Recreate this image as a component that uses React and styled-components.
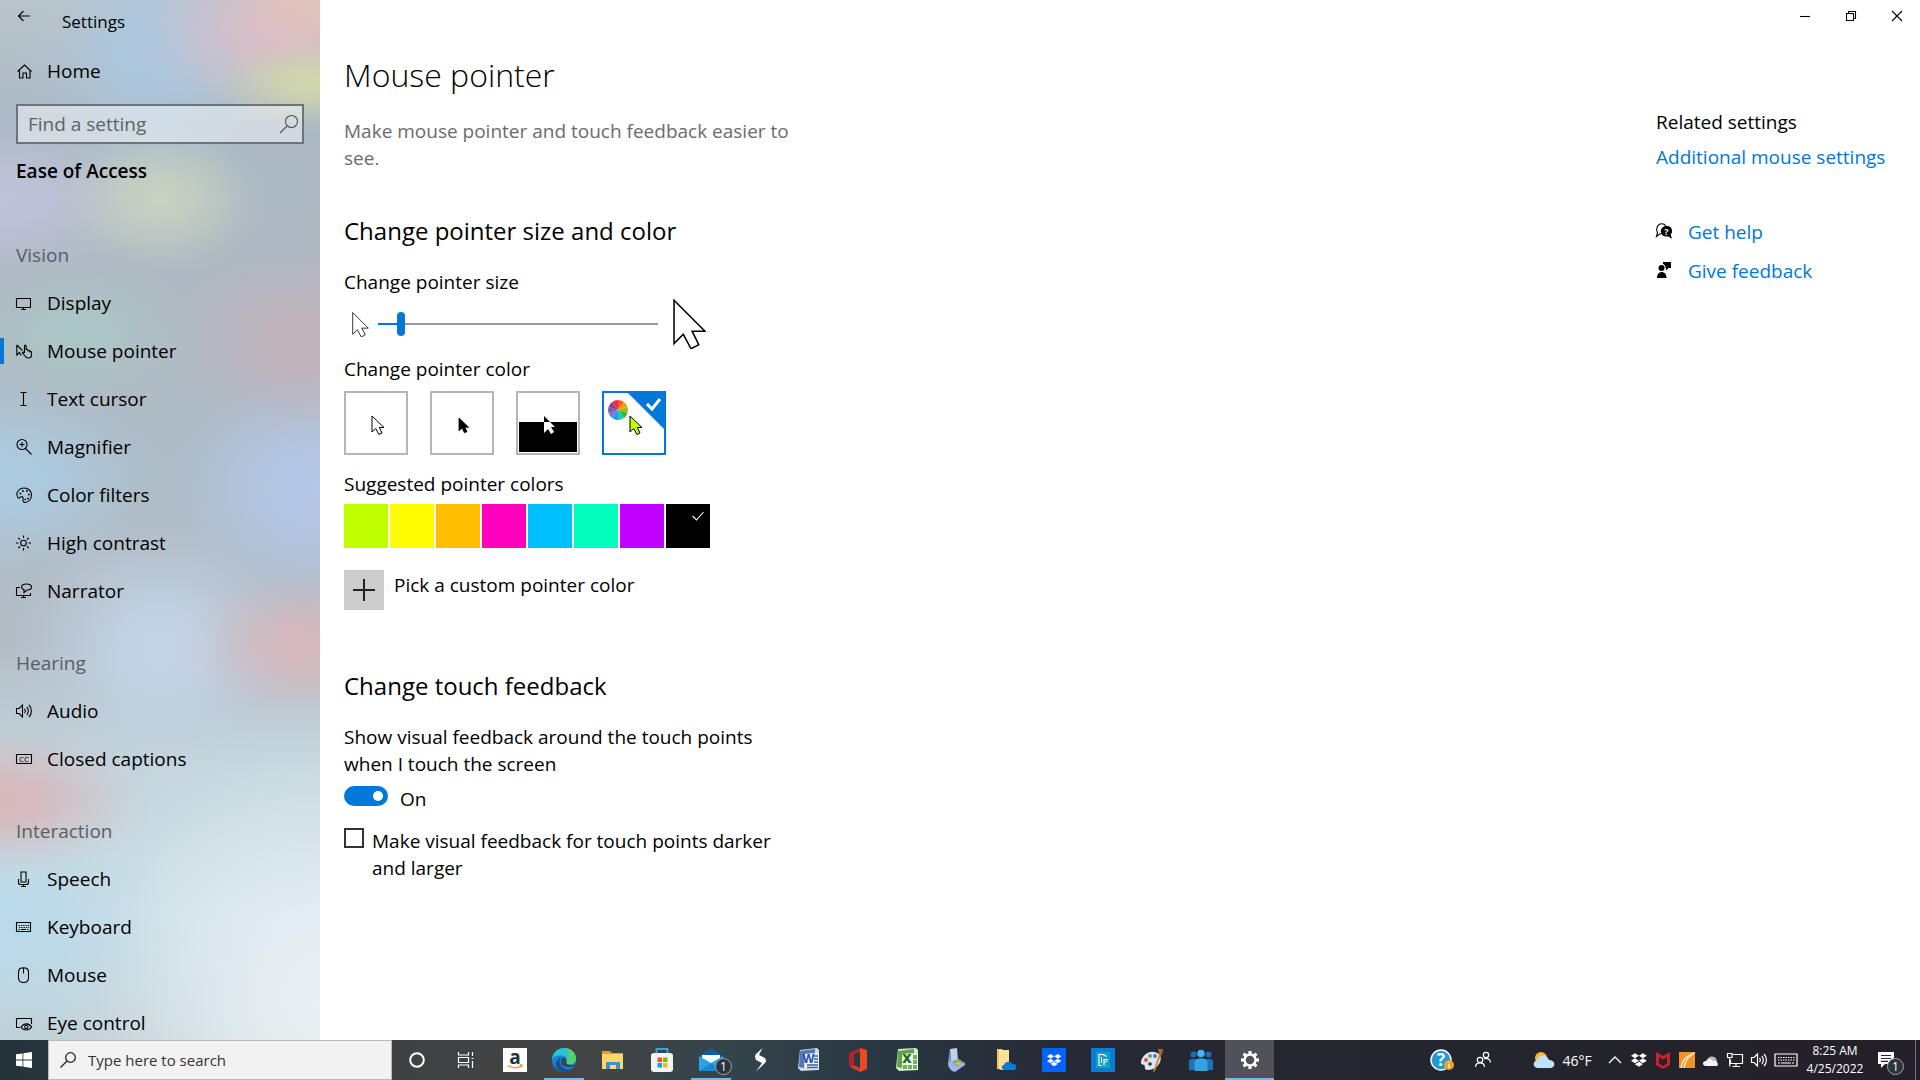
import { useState } from 'react'
import styled, { createGlobalStyle, css } from 'styled-components'

const GlobalStyle = createGlobalStyle`
    * {
        box-sizing: border-box;
    }
    body {
        margin: 0;
        background: #ffffff;
        color: #000000;
        font-family: "Open Sans", "Noto Sans", sans-serif;
        font-size: 19px;
        line-height: 27px;
    }
    button, input {
        font: inherit;
        color: inherit;
    }
    button {
        padding: 0;
        border: 0;
        background: none;
    }
`

const Desktop = styled.div`
    display: flex;
    flex-direction: column;
    height: 100vh;
`

const Window = styled.div`
    display: flex;
    flex: 1;
    min-height: 0;
`

/* ---------- sidebar ---------- */

// soft spot of colour: rgb triplet, radii and centre
const spot = (rgb, radii, at, strength = 0.9) =>
    `radial-gradient(ellipse ${radii} at ${at}, rgb(${rgb} / ${strength}), rgb(${rgb} / ${strength * 0.8}) 30%, rgb(${rgb} / ${strength * 0.4}) 58%, rgb(${rgb} / ${strength * 0.1}) 82%, transparent)`

const spots = [
    spot('228 196 184', '110px 70px', '100% 0%'),
    spot('210 217 168', '110px 50px', '98% 8%'),
    spot('222 190 202', '140px 90px', '84% 3%'),
    spot('170 200 225', '140px 130px', '48% 5%'),
    spot('202 213 193', '110px 80px', '50% 19%'),
    spot('192 195 220', '170px 90px', '0% 19%'),
    spot('168 204 200', '130px 80px', '24% 32%', 0.7),
    spot('200 178 186', '150px 100px', '98% 33%', 0.8),
    spot('181 200 237', '170px 130px', '100% 47%'),
    spot('171 205 228', '180px 110px', '0% 46%'),
    spot('218 183 187', '130px 80px', '96% 62%'),
    spot('197 215 234', '150px 130px', '50% 62%'),
    spot('218 180 183', '160px 80px', '0% 77%'),
    spot('184 217 234', '180px 130px', '2% 89%'),
    spot('236 243 246', '280px 320px', '100% 97%'),
]

const Sidebar = styled.aside`
    flex: none;
    width: 320px;
    overflow: hidden;
    background: ${spots.join(', ')},
        linear-gradient(#b9c4c9 0%, #abb9c5 12%, #b1b9c2 30%, #aebcc6 45%, #b4bdc6 62%, #c3d5dd 74%, #cadde4 88%, #c0d0d6 100%);
`

const TitleBar = styled.div`
    display: flex;
    gap: 30px;
    padding: 8px 16px 0;
    font-size: 17px;
`

const BackButton = styled.button`
    display: flex;
    width: 16px;
    height: 16px;
`

const NavLink = styled.a`
    display: flex;
    align-items: center;
    gap: 15px;
    height: 48px;
    padding-right: 16px;
    padding-left: 12px;
    border-left: 4px solid ${({ $active }) => ($active ? '#0078d7' : 'transparent')};
    border-image: ${({ $active }) =>
        $active ? 'linear-gradient(transparent 24%, #0078d7 24%, #0078d7 76%, transparent 76%) 1' : 'none'};
    border-width: 0 0 0 4px;
    color: #000000;
    text-decoration: none;
`

const HomeLink = styled(NavLink)`
    margin-top: 12px;
`

const SearchBox = styled.label`
    display: flex;
    align-items: center;
    height: 40px;
    margin: 9px 16px 0;
    padding: 0 3px 0 10px;
    border: 2px solid #6c7579;
    background: rgba(255, 255, 255, 0.45);
`

const SearchInput = styled.input`
    flex: 1;
    min-width: 0;
    padding: 0;
    border: 0;
    outline: 0;
    background: transparent;
    &::placeholder {
        color: #5c6468;
        opacity: 1;
    }
`

const Category = styled.h2`
    margin: 14px 16px 46px;
    font-size: 19px;
    font-weight: 600;
    line-height: 27px;
`

const NavGroup = styled.nav`
    margin-bottom: 24px;
`

const NavHeading = styled.h3`
    display: flex;
    align-items: center;
    height: 48px;
    margin: 0 16px;
    color: #566066;
    font-size: 19px;
    font-weight: 400;
`

/* ---------- content ---------- */

const Content = styled.div`
    display: flex;
    flex: 1;
    flex-direction: column;
    min-width: 0;
`

const Controls = styled.div`
    display: flex;
    justify-content: flex-end;
`

const ControlButton = styled.button`
    display: flex;
    align-items: center;
    justify-content: center;
    width: 46px;
    height: 32px;
`

const Columns = styled.div`
    display: flex;
    justify-content: space-between;
`

const Page = styled.main`
    width: 480px;
    padding: 20px 0 0 24px;
`

const Title = styled.h1`
    margin: 0 0 20px;
    font-size: 32px;
    font-weight: 300;
    line-height: 46px;
`

const Intro = styled.p`
    margin: 0 0 41px;
    color: #6b6b6b;
`

const Section = styled.section`
    margin-bottom: 58px;
`

const SectionTitle = styled.h2`
    margin: 0 0 20px;
    font-size: 24px;
    font-weight: 400;
    line-height: 36px;
`

const Label = styled.p`
    margin: 0;
`

const ControlLabel = styled.label`
    display: block;
`

const SliderRow = styled.div`
    display: flex;
    align-items: center;
    height: 50px;
    margin: 3px 0 7px;
    padding-left: 8px;
`

const Slider = styled.input`
    width: 280px;
    height: 24px;
    margin: 0 15px 0 9px;
    appearance: none;
    background: linear-gradient(90deg, #0078d7 8%, #999999 8%) center / 100% 2px no-repeat;
    &::-webkit-slider-thumb {
        width: 8px;
        height: 24px;
        appearance: none;
        border-radius: 4px;
        background: #0078d7;
    }
`

const Tiles = styled.div`
    display: flex;
    gap: 22px;
    margin: 8px 0 16px;
`

const Tile = styled.label`
    position: relative;
    width: 64px;
    height: 64px;
    border: 2px solid ${({ $checked }) => ($checked ? '#0078d7' : '#b5b5b5')};
    svg {
        display: block;
    }
`

const HiddenRadio = styled.input`
    position: absolute;
    inset: 0;
    margin: 0;
    opacity: 0;
`

const Swatches = styled.div`
    display: flex;
    gap: 2px;
    margin: 6px 0 22px;
`

const Swatch = styled.label`
    position: relative;
    display: flex;
    justify-content: flex-end;
    width: 44px;
    height: 44px;
    padding: 6px 5px;
    background: ${({ $color }) => $color};
`

const CustomColor = styled.button`
    display: flex;
    gap: 10px;
    height: 40px;
    line-height: 31px;
`

const PlusBox = styled.span`
    display: flex;
    align-items: center;
    justify-content: center;
    width: 40px;
    height: 40px;
    background: #cccccc;
`

const ToggleRow = styled.div`
    display: flex;
    gap: 12px;
    margin: 8px 0 15px;
`

const Toggle = styled.input`
    display: flex;
    align-items: center;
    width: 44px;
    height: 20px;
    margin: 0;
    padding: 0 5px;
    appearance: none;
    border-radius: 10px;
    background: #0078d7;
    &::before {
        content: '';
        width: 10px;
        height: 10px;
        margin-left: ${({ checked }) => (checked ? 'auto' : '0')};
        border-radius: 50%;
        background: #ffffff;
    }
`

const CheckRow = styled.label`
    display: flex;
    gap: 8px;
`

const CheckBox = styled.input`
    flex: none;
    width: 20px;
    height: 20px;
    margin: 0;
    appearance: none;
    border: 2px solid #333333;
    &:checked {
        background: #0078d7;
    }
`

const Related = styled.aside`
    display: flex;
    flex-direction: column;
    width: 264px;
    padding-top: 77px;
`

const BlueLink = styled.a`
    color: #0078d7;
    text-decoration: none;
`

const RelatedLink = styled(BlueLink)`
    margin: 8px 0 48px;
`

const HelpLink = styled(BlueLink)`
    display: flex;
    gap: 16px;
    margin-bottom: 12px;
    svg {
        margin-top: 4px;
    }
`

/* ---------- taskbar ---------- */

const Taskbar = styled.footer`
    display: flex;
    flex: none;
    height: 40px;
    background: linear-gradient(90deg, #23343a 0%, #3f4242 20%, #424445 31%, #33444b 38%, #293943 45%, #262a36 55%, #25262f 66%, #24262f 76%, #241f28 100%);
    color: #ffffff;
`

const taskButton = css`
    display: flex;
    align-items: center;
    justify-content: center;
    height: 40px;
`

const StartButton = styled.button`
    ${taskButton}
    width: 48px;
`

const TaskSearch = styled.label`
    display: flex;
    align-items: center;
    gap: 12px;
    width: 344px;
    padding-left: 11px;
    border: 1px solid #b9b9b9;
    background: #f2f2f2;
    color: #222222;
    font-size: 15px;
    input::placeholder {
        color: #333333;
    }
`

const TaskButton = styled.button`
    ${taskButton}
    position: relative;
    width: 49px;
    background: ${({ $active }) => ($active ? '#505159' : 'none')};
    &::after {
        content: '';
        display: ${({ $open, $active }) => ($open || $active ? 'block' : 'none')};
        position: absolute;
        bottom: 0;
        width: ${({ $active }) => ($active ? '100%' : '40px')};
        height: 2px;
        background: #76b9ed;
    }
`

const Badge = styled.span`
    position: absolute;
    right: ${({ $right = 3 }) => $right}px;
    bottom: 5px;
    width: 17px;
    height: 17px;
    border: 1px solid #a0a4a8;
    border-radius: 50%;
    background: #2b353b;
    font-size: 12px;
    line-height: 15px;
    text-align: center;
`

const Tray = styled.div`
    display: flex;
    align-items: center;
    margin-left: auto;
`

const TrayButton = styled.button`
    ${taskButton}
    position: relative;
    width: ${({ $width }) => $width}px;
    gap: 6px;
    font-size: 14px;
`

const Weather = styled(TrayButton)`
    padding-left: 18px;
`

const Notifications = styled(TrayButton)`
    padding-right: 14px;
`

const Clock = styled.button`
    width: 70px;
    font-size: 12px;
    line-height: 18px;
`

const ShowDesktop = styled.button`
    width: 5px;
    height: 40px;
    border-left: 1px solid #77757b;
`

/* ---------- icons ---------- */

function Glyph({ size = 16, box = size, children, ...rest }) {
    return (
        <svg
            width={size}
            height={size}
            viewBox={`0 0 ${box} ${box}`}
            fill="none"
            stroke="currentColor"
            strokeWidth="1.1"
            overflow="visible"
            aria-hidden="true"
            {...rest}
        >
            {children}
        </svg>
    )
}

function Picture({ children }) {
    return <Glyph size={24} stroke="none">{children}</Glyph>
}

const glyphs = {
    home: <path d="M1.500 8.500 8.500 2l7 6.500M3.500 7v8h3.500v-5h3.500v5h3.500V7" />,
    display: <path d="M.5 3.500h14v9H.5zM7.500 12.500v2M5 14.500h5" />,
    pointer: (
        <>
            <path d="M.8 2v10l2.700-2.500L5 12.500M.8 2l5.700 5.500" />
            <path d="M8.500 10V3c0-1.300 1.600-1.300 1.600 0v4M10.100 6.500c1-.6 1.800 0 1.800 1v1M11.900 7.500c1-.6 1.900 0 1.900 1v1M13.800 8.500c1-.5 1.700 0 1.700 1v2.500c0 2-1.200 3-3.200 3-1.800 0-2.700-.8-3.300-2L6.300 9.800c.4-1 1.500-.8 2.200.2" />
        </>
    ),
    cursor: <path d="M4.500 1.500h6M4.500 14.500h6M7.500 1.500v13" />,
    magnifier: <path d="M11 5.500a5 5 0 1 1-10 0 5 5 0 0 1 10 0zM9.500 9.500l6 6M6 3v5M3.500 5.500h5" />,
    palette: (
        <>
            <path d="M1 8.500C.3 4.500 3.500 1 8 1s7.500 3 7.500 7-3 7.500-6.500 7.500c-1.500 0-2.500-1.500-2-3 .6-1.800-.2-3.200-1.700-2.800C4 10 3.600 11.200 2.500 11 1.500 10.800 1.200 9.500 1 8.500z" />
            <path d="M3.500 6.500h1.800M6 4h1.800M10 4h1.800M12 7.500h1.800M11 11.500h1.800M8.500 12.500h1.500" strokeWidth="1.700" />
        </>
    ),
    sun: (
        <>
            <circle cx="7.500" cy="8" r="2.800" />
            <path d="M7.500 .5V3M7.500 13v2.500M0 8h2.500M12.500 8H15M2.300 2.800 4 4.500M11 11.500l1.700 1.700M2.300 13.200 4 11.500M11 4.500l1.700-1.700" />
        </>
    ),
    narrator: (
        <>
            <path d="M4 4.500H.5v8h14V10M7.500 12.500v2M5 14.500h5" />
            <path d="M10.500 1c3 0 5 1.200 5 3s-2 3-4.500 3L8 9.500V6.600C6.500 6.200 5.500 5.200 5.500 4c0-1.800 2-3 5-3z" />
        </>
    ),
    audio: <path d="M.5 5.500H3l3.500-3.500v12L3 10.500H.5zM8.500 6c1 1 1 3 0 4M10.800 4c2 2 2 6 0 8M13 2c3.200 3 3.200 9 0 12" />,
    captions: (
        <>
            <path d="M.5 3.500h15v9H.5z" />
            <text x="8" y="10.800" fill="currentColor" stroke="none" fontSize="8" textAnchor="middle">CC</text>
        </>
    ),
    mic: <path d="M5 1h5v10H5zM2.500 8v3.500c0 1.500 1 2 2 2h6c1 0 2-.5 2-2V8M7.500 13.500v2M5 15.500h5" />,
    keyboard: (
        <>
            <path d="M.5 3.500h14v9H.5z" />
            <path d="M2.500 6.500H13M3 8.500h10" strokeDasharray="1.300 1" />
            <path d="M2.500 10.500H4M5 10.500h5M11 10.500h1.500" />
        </>
    ),
    mouse: <path d="M7.500 .7c3 0 5 1.300 5 4.300v6c0 3-2 4.500-5 4.500s-5-1.500-5-4.500V5c0-3 2-4.300 5-4.300zM7.500 1v5.500" />,
    eye: (
        <>
            <path d="M4 12.500H.5v-9h15V9" />
            <path d="M5 12c3-4.200 8-4.200 10.700 0-3 4-8 4-10.700 0z" />
            <circle cx="10.300" cy="12" r="1.700" />
        </>
    ),
}

const Arrow = ({ size, fill = '#ffffff', width = 1 }) => (
    <svg width={Math.round(size * 0.667)} height={size} viewBox="0 0 32 48" fill={fill} stroke="#000000" strokeWidth={width} aria-hidden="true">
        <path d="M1 1v42l9-9 7.500 14 7.500-4-6.500-13H31z" />
    </svg>
)

const TileArrow = ({ fill = '#ffffff', stroke = '#000000', scale = 1 }) => (
    <path
        d="M0 0v16l3.800-3.500 3 6 3.200-1.500-2.700-5.500H12z"
        transform={`translate(26 23) scale(${scale})`}
        fill={fill}
        stroke={stroke}
        strokeWidth="1"
    />
)

const wheelColors = ['#ff5a1f', '#ff9800', '#9bbf10', '#35b34a', '#1fc8b0', '#2196f3', '#6b7fd9', '#7b5aa8', '#8c3f8c', '#e6304b']

const ColorWheel = () => (
    <g transform="translate(14 17)">
        {wheelColors.map((color, i) => (
            <path key={color} d="M0 0V-10A10 10 0 0 1 5.878-8.090Z" fill={color} transform={`rotate(${i * 36})`} />
        ))}
    </g>
)

const tiles = [
    { id: 'white', art: <TileArrow /> },
    { id: 'black', art: <g transform="translate(1 2)"><TileArrow fill="#000000" stroke="#000000" scale={0.8} /></g> },
    {
        id: 'inverted',
        art: (
            <>
                <path d="M1 29h58v30H1z" fill="#000000" />
                <path d="M26 23v6h6z" fill="#000000" />
                <path d="M26 29h6l5 5h-4l3 5-3 2-3-5-4 4z" fill="#ffffff" />
            </>
        ),
    },
    {
        id: 'custom',
        art: (
            <>
                <ColorWheel />
                <path d="M24 0h36v36z" fill="#0078d7" />
                <path d="m43 11 5 5 8-10" stroke="#ffffff" strokeWidth="3" />
                <TileArrow fill="#bfff00" />
            </>
        ),
    },
]

const swatches = ['#bfff00', '#fdfd00', '#ffbf00', '#ff00bf', '#00bfff', '#00ffbf', '#bf00ff', '#000000']

const groups = [
    {
        title: 'Vision',
        items: [
            ['Display', 'display'],
            ['Mouse pointer', 'pointer'],
            ['Text cursor', 'cursor'],
            ['Magnifier', 'magnifier'],
            ['Color filters', 'palette'],
            ['High contrast', 'sun'],
            ['Narrator', 'narrator'],
        ],
    },
    {
        title: 'Hearing',
        items: [
            ['Audio', 'audio'],
            ['Closed captions', 'captions'],
        ],
    },
    {
        title: 'Interaction',
        items: [
            ['Speech', 'mic'],
            ['Keyboard', 'keyboard'],
            ['Mouse', 'mouse'],
            ['Eye control', 'eye'],
        ],
    },
]

const dropboxPath =
    'M6 1.800 0 5.600l6 3.800 6-3.800zM18 1.800l-6 3.800 6 3.800 6-3.800zM0 13.300l6 3.800 6-3.800-6-3.800zM18 9.500l-6 3.800 6 3.800 6-3.800zM6 18.400l6 3.800 6-3.800-6-3.800z'

const apps = [
    {
        name: 'Cortana',
        icon: <circle cx="12" cy="12" r="6.800" stroke="#ffffff" strokeWidth="2" fill="none" />,
    },
    {
        name: 'Task View',
        icon: (
            <path
                d="M4.500 4v3h10V4M4.500 20v-3h10v3M4.500 9.500h10v5h-10zM18.500 4v4M18.500 13v7M17.500 10.500h2"
                stroke="#ffffff"
                strokeWidth="1.200"
                fill="none"
            />
        ),
    },
    {
        name: 'Amazon',
        icon: (
            <>
                <path d="M0 0h24v24H0z" fill="#ffffff" />
                <text x="12" y="16" fill="#232f3e" fontSize="19" fontWeight="700" textAnchor="middle">a</text>
                <path d="M5 17.500c4 3 10 3 13 .5M16.500 17h2.500l-.5 2.500" stroke="#f59c1c" strokeWidth="1.300" fill="none" />
            </>
        ),
    },
    {
        name: 'Edge',
        open: true,
        icon: (
            <>
                <circle cx="12" cy="12" r="12" fill="#1683cf" />
                <path d="M0 11C1 4 6 0 12 0c7 0 12 5 12 10.500 0 4-3 6-6 6-2.500 0-4-1-3.500-2.500 1-2 .5-6-4.500-6.500C5 7 1.500 8.500 0 11z" fill="#2fc1d5" />
                <path d="M14 .2C20 1 24 5.500 24 10.500c0 4-3 6-6 6-2.500 0-4-1-3.500-2.500C17 10 17 4 14 .2z" fill="#52d06f" />
                <path d="M8.500 9.500C6.500 13 8 19 13 21c3 1 6 .5 8.500-1.500-4 6-12 6-16 1.500-3-4-1.500-9.500 3-11.500z" fill="#124f98" />
                <path d="M10.500 10c-2.500 2-2 6 1 8 3 1.500 8 1.500 11-.5l1.500-2c-2 2-6 1.500-8 1-1.500-.5-2-1.500-1.500-2.500.5-2-1-5-4-4z" fill="#37474b" />
            </>
        ),
    },
    {
        name: 'File Explorer',
        icon: (
            <>
                <path d="M1 3h8l2 2h11v5H1z" fill="#e4a018" />
                <path d="M1 6h21v15H1z" fill="#ffd667" />
                <path d="M5 21v-7h14v7h-4v-4H9v4z" fill="#3d8fd4" />
            </>
        ),
    },
    {
        name: 'Microsoft Store',
        icon: (
            <>
                <path d="M6.500 7V1h11v6" stroke="#2ea8e0" strokeWidth="1.800" fill="none" />
                <rect x="1" y="5" width="22" height="19" rx="3" fill="#f4f4f4" />
                <path d="M7.500 9.500H12V14H7.500z" fill="#f25022" />
                <path d="M13 9.500h4.500V14H13z" fill="#7fba00" />
                <path d="M7.500 15H12v4.500H7.500z" fill="#00a4ef" />
                <path d="M13 15h4.500v4.500H13z" fill="#ffb900" />
            </>
        ),
    },
    {
        name: 'Mail',
        open: true,
        badge: '1',
        icon: (
            <>
                <path d="M0 8 12 0l12 8v15H0z" fill="#0f5ca8" />
                <path d="M3 7h18v9H3z" fill="#ffffff" />
                <path d="m0 8 12 7 12-7v15H0z" fill="#2ba4e6" />
                <path d="m0 23 12-8 12 8z" fill="#1989d4" />
            </>
        ),
    },
    {
        name: 'Stocks',
        icon: <path d="M14.500 0 7.500 6.500 7 9l1 3 6 3-6 8.500 9.500-9 .5-2-1-2.500-6-3z" fill="#ffffff" />,
    },
    {
        name: 'Word',
        icon: (
            <>
                <path d="M3 2 20 0l2 2v20l-18 1-3-3z" fill="#cfdcf1" />
                <path d="m3 3 15-2v4L7 6v14l-5-1z" fill="#5377b8" />
                <path d="M8 6h14v15H8z" fill="#eef3fb" />
                <path d="M17 8h4M17 11h4M17 14h4M10 17h11M10 19.500h11" stroke="#3860a8" strokeWidth="1.400" />
                <text x="11.500" y="15" fill="#2450a0" fontSize="12" fontWeight="700" textAnchor="middle">W</text>
            </>
        ),
    },
    {
        name: 'Office',
        icon: (
            <>
                <path d="m3 5 11-5v4L8 6v11l-4 2-1-1z" fill="#b3212b" />
                <path d="m14 0 7 2v19l-7 3z" fill="#ea4a1f" />
                <path d="m4 19 4-2 6 3v4z" fill="#d93a2b" />
            </>
        ),
    },
    {
        name: 'Excel',
        icon: (
            <>
                <path d="M3 1 21 0l2 2v20L4 23l-3-3z" fill="#d5e9cd" />
                <path d="M3 3 19 1v4L7 6v14l-5-1z" fill="#5fa548" />
                <path d="M8 6h15v16H8z" fill="#eff8ec" />
                <path d="M18 7h4v4h-4zM18 12h4v4h-4zM18 17h4v4h-4zM13 17h4v4h-4zM8 17h4v4H8z" fill="#6fb258" />
                <text x="12" y="15" fill="#1e6b24" fontSize="13" fontWeight="800" textAnchor="middle">X</text>
            </>
        ),
    },
    {
        name: 'Scanner',
        icon: (
            <>
                <path d="m6 1 7-1 1 12-7 4z" fill="#bdd0f3" />
                <path d="M6 1 7 16l-3-1z" fill="#7f9ce0" />
                <path d="m4 15 9-4 8 4v2l-10 7c-4-1-7-4-7-9z" fill="#9cb4ea" />
                <path d="m8 14 7-3 5 4-7 3z" fill="#8cae5a" />
                <path d="m11 15 4-1 3 2-4 1z" fill="#e2c34b" />
            </>
        ),
    },
    {
        name: 'OneDrive Folder',
        icon: (
            <>
                <path d="M4 1h5l1 1h6v20l-12-1z" fill="#f0c75e" />
                <path d="M6 2h10v18l-7 2-3-1z" fill="#ffe29a" />
                <path d="M11 22c-3-1-3-5 0-5 1-4 7-4 8-1 4-1 6 4 3 6z" fill="#0f7bd0" />
            </>
        ),
    },
    {
        name: 'Dropbox',
        icon: (
            <>
                <path d="M0 0h24v24H0z" fill="#0062ff" />
                <path d={dropboxPath} fill="#ffffff" transform="translate(5 5) scale(.6)" />
            </>
        ),
    },
    {
        name: 'File Manager',
        icon: (
            <>
                <path d="M0 0h24v24H0z" fill="#0a7bd6" />
                <path d="M5 4h14v16H5z" fill="#10a0c0" />
                <path d="M13 8V6.500H8v11h3M10.500 9v6M13 17.500v-6h3v2M13 14h2.500M14 7.500l1.500 1" stroke="#ffffff" fill="none" />
            </>
        ),
    },
    {
        name: 'Paint',
        icon: (
            <>
                <path d="M1 14C2 8 8 3 14 4s8 5 6 10-7 8-12 8-2-4-4-5-3 0-3-3z" fill="#dbe8f4" />
                <circle cx="6" cy="12" r="2" fill="#e24b3c" />
                <circle cx="10" cy="8" r="2" fill="#5cad47" />
                <circle cx="15" cy="8" r="2" fill="#3c80d0" />
                <circle cx="10" cy="16" r="1.800" fill="#293540" />
                <path d="m19 6 2 1-6 16-2 1z" fill="#d98a2b" />
                <path d="m18 1 5 0-1 6-3-1z" fill="#a86238" />
            </>
        ),
    },
    {
        name: 'People',
        icon: (
            <>
                <circle cx="4.500" cy="6.500" r="3" fill="#1a6fb5" />
                <circle cx="19.500" cy="6.500" r="3" fill="#1a6fb5" />
                <path d="M0 22V13c0-3 8-3 8 0v9zM16 22v-9c0-3 8-3 8 0v9z" fill="#1c73ba" />
                <circle cx="12" cy="5.500" r="3.800" fill="#46b4ee" />
                <path d="M5.500 23V14c0-5 13-5 13 0v9z" fill="#32a2e4" />
            </>
        ),
    },
    {
        name: 'Settings',
        active: true,
        icon: (
            <g stroke="#ffffff" fill="none">
                <circle cx="12" cy="12" r="5.500" strokeWidth="2.400" />
                {[0, 45, 90, 135, 180, 225, 270, 315].map((angle) => (
                    <path key={angle} d="M12 6V3" strokeWidth="3.200" transform={`rotate(${angle} 12 12)`} />
                ))}
            </g>
        ),
    },
]

const tray = [
    {
        name: 'Help',
        width: 42,
        icon: (
            <>
                <circle cx="11" cy="12" r="10" fill="#1e9bd7" stroke="#ffffff" strokeWidth="1.500" />
                <text x="11" y="18" fill="#ffffff" fontSize="17" fontWeight="700" textAnchor="middle">?</text>
                <circle cx="19" cy="17" r="5" fill="#eea320" />
                <path d="M19 14v1M19 16v4" stroke="#ffffff" strokeWidth="1.300" />
            </>
        ),
    },
    {
        name: 'Contacts',
        width: 40,
        icon: (
            <g stroke="#ffffff" strokeWidth="1.200" fill="none">
                <circle cx="9" cy="12" r="2.700" />
                <path d="M4.500 19c0-5.500 9-5.500 9 0" />
                <circle cx="15" cy="7" r="2.700" />
                <path d="M13 11c2.500-1.500 6.500 0 6.500 3.500" />
            </g>
        ),
    },
]

const status = [
    {
        name: 'Show hidden icons',
        icon: <path d="m6 15 6-6 6 6" stroke="#ffffff" strokeWidth="1.300" fill="none" />,
    },
    {
        name: 'Dropbox status',
        icon: <path d={dropboxPath} fill="#ffffff" transform="translate(4 4) scale(.66)" />,
    },
    {
        name: 'McAfee',
        icon: <path d="m5 4 7 4 7-4v13l-7 4-7-4zM8 9v6.500l4 2.500 4-2.500V9l-4 2.500z" fill="#c8222f" fillRule="evenodd" />,
    },
    {
        name: 'Signal',
        icon: (
            <>
                <path d="M4 4h16v16H4z" fill="#f49320" />
                <path d="M6 20C7 12 12 7 20 5M9 20c1-7 4-11 8-13" stroke="#ffffff" strokeWidth="1.200" fill="none" />
            </>
        ),
    },
    {
        name: 'OneDrive',
        icon: (
            <>
                <path d="M8 14c0-7 9-7 10-1l-4 4z" fill="#b9b9b9" />
                <path d="M7 18c-4 0-4-5 0-5 2-3 6-2 7 0 4-2 7 5 3 5z" fill="#f3f3f3" />
            </>
        ),
    },
    {
        name: 'Network',
        icon: <path d="M10 6.500h9.500v9H7.500V12M13 15.500v3M9.500 18.500H17M4.500 5.500H9v4H4.500zM6.700 9.500v9" stroke="#ffffff" strokeWidth="1.200" fill="none" />,
    },
    {
        name: 'Volume',
        icon: <path d="M4.500 9.500H7L10.500 6v12L7 14.500H4.500zM12.500 10c1 1 1 3 0 4M14.800 8c2 2 2 6 0 8M17 6c3.200 3 3.200 9 0 12" stroke="#ffffff" strokeWidth="1.200" fill="none" />,
    },
]

function App() {
    const [pointer, setPointer] = useState('custom')
    const [color, setColor] = useState('#000000')
    const [size, setSize] = useState(2)
    const [feedback, setFeedback] = useState(true)
    const [darker, setDarker] = useState(false)

    return (
        <Desktop>
            <GlobalStyle />
            <Window>
                <Sidebar>
                    <TitleBar>
                        <BackButton aria-label="Back">
                            <Glyph><path d="M14 8H2.500M7.500 3l-5 5 5 5" /></Glyph>
                        </BackButton>
                        <span>Settings</span>
                    </TitleBar>
                    <HomeLink href="#home">
                        <Glyph>{glyphs.home}</Glyph>
                        Home
                    </HomeLink>
                    <SearchBox>
                        <SearchInput type="text" placeholder="Find a setting" aria-label="Find a setting" />
                        <Glyph size={20} color="#4d5559"><circle cx="12.500" cy="7.500" r="6" /><path d="M8 12 1 19" /></Glyph>
                    </SearchBox>
                    <Category>Ease of Access</Category>
                    {groups.map(({ title, items }) => (
                        <NavGroup key={title} aria-label={title}>
                            <NavHeading>{title}</NavHeading>
                            {items.map(([name, icon]) => (
                                <NavLink key={name} href={`#${icon}`} $active={name === 'Mouse pointer'}>
                                    <Glyph>{glyphs[icon]}</Glyph>
                                    {name}
                                </NavLink>
                            ))}
                        </NavGroup>
                    ))}
                </Sidebar>
                <Content>
                    <Controls>
                        <ControlButton aria-label="Minimize"><Glyph size={10}><path d="M0 5.500h10" /></Glyph></ControlButton>
                        <ControlButton aria-label="Restore"><Glyph size={10}><path d="M.5 2.500h7v7h-7zM2.500 2.500v-2h7v7h-2" /></Glyph></ControlButton>
                        <ControlButton aria-label="Close"><Glyph size={10}><path d="m0 0 10 10M10 0 0 10" /></Glyph></ControlButton>
                    </Controls>
                    <Columns>
                        <Page>
                            <Title>Mouse pointer</Title>
                            <Intro>Make mouse pointer and touch feedback easier to see.</Intro>
                            <Section>
                                <SectionTitle>Change pointer size and color</SectionTitle>
                                <ControlLabel htmlFor="pointer-size">Change pointer size</ControlLabel>
                                <SliderRow>
                                    <Arrow size={25} width={1.5} />
                                    <Slider id="pointer-size" type="range" min="1" max="15" value={size} onChange={(e) => setSize(e.target.value)} />
                                    <Arrow size={50} width={1.5} />
                                </SliderRow>
                                <Label>Change pointer color</Label>
                                <Tiles>
                                    {tiles.map(({ id, art }) => (
                                        <Tile key={id} $checked={pointer === id}>
                                            <HiddenRadio type="radio" name="pointer" aria-label={id} checked={pointer === id} onChange={() => setPointer(id)} />
                                            <Glyph size={60} stroke="none">{art}</Glyph>
                                        </Tile>
                                    ))}
                                </Tiles>
                                <Label>Suggested pointer colors</Label>
                                <Swatches>
                                    {swatches.map((value) => (
                                        <Swatch key={value} $color={value}>
                                            <HiddenRadio type="radio" name="color" aria-label={value} checked={color === value} onChange={() => setColor(value)} />
                                            {color === value && <Glyph size={14} color="#ffffff"><path d="m1.500 6 4 4 7-8" /></Glyph>}
                                        </Swatch>
                                    ))}
                                </Swatches>
                                <CustomColor>
                                    <PlusBox><Glyph size={22} strokeWidth="2" color="#222222"><path d="M11 0v22M0 11h22" /></Glyph></PlusBox>
                                    Pick a custom pointer color
                                </CustomColor>
                            </Section>
                            <Section>
                                <SectionTitle>Change touch feedback</SectionTitle>
                                <ControlLabel htmlFor="feedback">Show visual feedback around the touch points when I touch the screen</ControlLabel>
                                <ToggleRow>
                                    <Toggle id="feedback" type="checkbox" role="switch" checked={feedback} onChange={(e) => setFeedback(e.target.checked)} />
                                    {feedback ? 'On' : 'Off'}
                                </ToggleRow>
                                <CheckRow>
                                    <CheckBox type="checkbox" checked={darker} onChange={(e) => setDarker(e.target.checked)} />
                                    Make visual feedback for touch points darker and larger
                                </CheckRow>
                            </Section>
                        </Page>
                        <Related>
                            <Label>Related settings</Label>
                            <RelatedLink href="#mouse-settings">Additional mouse settings</RelatedLink>
                            <HelpLink href="#help">
                                <Glyph color="#000000">
                                    <path d="M5 11H3.500L.5 13.500l1-4C-.5 5.500 1.500 1 5.500.8 8 .7 9 1.500 10 3" />
                                    <path d="M10.500 3.500c3 0 5 2 5 4.700 0 1.300-.5 2.500-1.500 3.300l1 3-3-1.700c-4 1-6.700-1.500-6.700-4.600 0-2.700 2.200-4.700 5.200-4.700z" fill="#000000" />
                                    <text x="10.500" y="11.500" fill="#ffffff" stroke="none" fontSize="9" fontWeight="700" textAnchor="middle">?</text>
                                </Glyph>
                                Get help
                            </HelpLink>
                            <HelpLink href="#feedback">
                                <Glyph color="#000000" stroke="none" fill="#000000">
                                    <circle cx="5.500" cy="6" r="3" />
                                    <path d="M1 16c0-8 9.500-8 9.500 0zM7 0h8v6h-2.500L10 8.500V6H9.500C9.500 4 8.500 2.500 7 2z" />
                                </Glyph>
                                Give feedback
                            </HelpLink>
                        </Related>
                    </Columns>
                </Content>
            </Window>
            <Taskbar>
                <StartButton aria-label="Start">
                    <Glyph stroke="none" fill="#ffffff"><path d="m0 2.300 6.500-.9v6.200H0zM7.300 1.300 16 0v7.600H7.300zM0 8.400h6.500v6.200L0 13.700zM7.300 8.400H16V16l-8.700-1.300z" /></Glyph>
                </StartButton>
                <TaskSearch>
                    <Glyph strokeWidth="1.300"><circle cx="10.500" cy="5.500" r="4.800" /><path d="M7 9 .5 15.500" /></Glyph>
                    <SearchInput type="text" placeholder="Type here to search" aria-label="Type here to search" />
                </TaskSearch>
                {apps.map(({ name, icon, badge, open, active }) => (
                    <TaskButton key={name} aria-label={name} $open={open} $active={active}>
                        <Picture>{icon}</Picture>
                        {badge && <Badge>{badge}</Badge>}
                    </TaskButton>
                ))}
                <Tray>
                    {tray.map(({ name, icon, width }) => (
                        <TrayButton key={name} aria-label={name} $width={width}><Picture>{icon}</Picture></TrayButton>
                    ))}
                    <Weather $width={100}>
                        <Picture>
                            <circle cx="9" cy="10" r="6" fill="#f6b932" />
                            <path d="M6 20c-5 0-6-6-1-8 2-6 10-6 12 0 7 0 7 8 1 8z" fill="#bfe2f8" />
                        </Picture>
                        46°F
                    </Weather>
                    {status.map(({ name, icon }) => (
                        <TrayButton key={name} aria-label={name} $width={24}><Picture>{icon}</Picture></TrayButton>
                    ))}
                    <TrayButton aria-label="Touch keyboard" $width={29}>
                        <svg width="24" height="14" viewBox="0 0 24 14" fill="none" stroke="#ffffff" strokeWidth="1.200" aria-hidden="true">
                            <path d="M1 1h22v12H1z" />
                            <path d="M4 4.500h17M4 7h17" strokeDasharray="1.500 1" />
                            <path d="M4 10h2M7 10h10M18 10h2" />
                        </svg>
                    </TrayButton>
                    <Clock>8:25 AM<br />4/25/2022</Clock>
                    <Notifications aria-label="Notifications" $width={45}>
                        <Picture><path d="M4 4h16v12h-9l-4 4v-4H4z" fill="#ffffff" /><path d="M7 7.500h10M7 10.500h10M7 13.300h7" stroke="#25222b" strokeWidth="1.200" /></Picture>
                        <Badge $right={11}>1</Badge>
                    </Notifications>
                    <ShowDesktop aria-label="Show desktop" />
                </Tray>
            </Taskbar>
        </Desktop>
    )
}

export default App
